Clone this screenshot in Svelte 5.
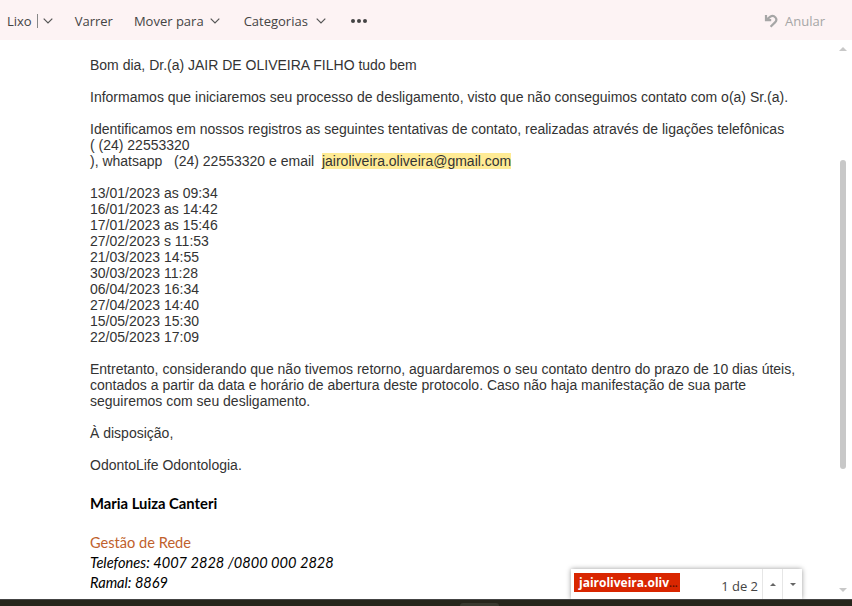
<script>
  const dates = ['13/01/2023 as 09:34','16/01/2023 as 14:42','17/01/2023 as 15:46','27/02/2023 s 11:53','21/03/2023 14:55','30/03/2023 11:28','06/04/2023 16:34','27/04/2023 14:40','15/05/2023 15:30','22/05/2023 17:09'];
</script>

<div class="page">
  <header class="toolbar">
    <div class="tools">
      <span class="lixo">Lixo<i class="sep"></i><svg class="chev" viewBox="0 0 10 6"><path d="M.7.7l4.3 4.3 4.3-4.3"/></svg></span>
      <span class="varrer">Varrer</span>
      <span>Mover para<svg class="chev" viewBox="0 0 10 6"><path d="M.7.7l4.3 4.3 4.3-4.3"/></svg></span>
      <span class="cats">Categorias<svg class="chev" viewBox="0 0 10 6"><path d="M.7.7l4.3 4.3 4.3-4.3"/></svg></span>
      <span class="dots"><b></b><b></b><b></b></span>
    </div>
    <div class="undo">
      <svg viewBox="0 0 14 14"><path d="M2 1v5.2h5.2M2.4 5.9L6.3 2.7a3.7 3.7 0 0 1 4.7 5.7L6.6 12.8"/></svg>
      <span>Anular</span>
    </div>
  </header>

  <main class="scroller">
    <article class="mail">
      <p>Bom dia, Dr.(a) JAIR DE OLIVEIRA FILHO tudo bem</p>
      <p>Informamos que iniciaremos seu processo de desligamento, visto que não conseguimos contato com o(a) Sr.(a).</p>
      <p>Identificamos em nossos registros as seguintes tentativas de contato, realizadas através de ligações telefônicas<br>( (24) 22553320<br>), whatsapp &nbsp; (24) 22553320 e email &nbsp;<mark>jairoliveira.oliveira@gmail.com</mark></p>
      <p>{#each dates as d}{d}<br>{/each}</p>
      <p>Entretanto, considerando que não tivemos retorno, aguardaremos o seu contato dentro do prazo de 10 dias úteis,<br>contados a partir da data e horário de abertura deste protocolo. Caso não haja manifestação de sua parte<br>seguiremos com seu desligamento.</p>
      <p>À disposição,</p>
      <p>OdontoLife Odontologia.</p>
      <div class="sign">
        <div class="name">Maria Luiza Canteri</div>
        <div class="role">Gestão de Rede</div>
        <div class="it">Telefones: 4007 2828 /0800 000 2828</div>
        <div class="it">Ramal: 8869</div>
      </div>
    </article>
    <div class="scrollbar">
      <span class="arrow up"></span>
      <div class="track"><span class="thumb"></span></div>
      <span class="arrow down"></span>
    </div>
    <div class="finder">
      <span class="hit">jairoliveira.oliv<small>...</small></span>
      <span class="count">1 de 2</span>
      <span class="btn"><i class="tri up"></i></span>
      <span class="btn"><i class="tri down"></i></span>
    </div>
  </main>
  <footer class="taskbar"><span class="tab"></span></footer>
</div>

<style>
  :global(body) { margin: 0; background: #fff; }
  .page { width: 852px; height: 606px; display: flex; flex-direction: column; overflow: hidden; }
  .toolbar { height: 40px; flex: none; box-sizing: border-box; padding-top: 1px; background: #fdf3f4; display: flex; align-items: center; justify-content: space-between; font: 13px "Open Sans", sans-serif; color: #444; }
  .tools { display: flex; align-items: center; gap: 22px; padding-left: 7px; }
  .tools > span { display: flex; align-items: center; gap: 6px; white-space: pre; }
  .lixo { gap: 5px !important; }
  .varrer { margin-right: -1px; }
  .cats { margin-left: -1px; gap: 8px !important; }
  .sep { width: 1px; height: 14px; background: #888; }
  .chev { width: 10px; height: 6px; fill: none; stroke: #555; stroke-width: 1.2; margin-right: 3px; }
  .lixo .chev { margin-right: 0; }
  .dots { gap: 2px !important; }
  .dots b { width: 4px; height: 4px; border-radius: 50%; background: #444; }
  .undo { display: flex; align-items: center; gap: 7px; padding-right: 27px; color: #a6a6a6; }
  .undo svg { width: 14px; height: 14px; fill: none; stroke: #a6a6a6; stroke-width: 2.2; }
  .scroller { flex: 1; min-height: 0; position: relative; display: flex; overflow: hidden; }
  .mail { flex: 1; padding: 17px 0 0 90px; font: 14px/16px "Liberation Sans", sans-serif; color: #333; }
  .mail p { margin: 0 0 16px; white-space: nowrap; }
  mark { background: #ffeb95; color: #333; }
  .sign { font: 14.6px/20px Lato, sans-serif; color: #000; padding-top: 4px; }
  .name { font-weight: 700; font-size: 14.8px; margin-bottom: 20px; }
  .role { color: #c0612c; }
  .it { font-style: italic; }
  .scrollbar { width: 12px; margin-right: 3px; display: flex; flex-direction: column; align-items: center; flex: none; }
  .arrow { width: 0; height: 0; border-left: 4px solid transparent; border-right: 4px solid transparent; flex: none; }
  .arrow.up { border-bottom: 4px solid #c8c8c8; margin-top: 7px; }
  .arrow.down { border-top: 4px solid #c8c8c8; margin-bottom: 7px; }
  .track { flex: 1; width: 6px; padding-top: 109px; display: flex; }
  .thumb { flex: 1; background: #c8c8c8; border-radius: 3px; margin-bottom: 119px; }
  .finder { position: absolute; left: 571px; bottom: 0; width: 231px; height: 30px; background: #fff; box-shadow: 0 0 5px rgba(0,0,0,.4); display: flex; align-items: center; font: 13px "Open Sans", sans-serif; color: #444; }
  .hit { position: absolute; left: 3px; top: 4px; width: 106px; height: 19px; box-sizing: border-box; padding-left: 5px; background: #d92600; color: #fff; font: 700 12px/19px "Open Sans", sans-serif; white-space: nowrap; overflow: hidden; }
  .hit small { color: #5a1000; font-size: 10px; }
  .count { margin-left: auto; margin-right: 4px; padding-top: 4px; }
  .btn { width: 19px; height: 100%; border-left: 1px solid #e6e6e6; display: flex; align-items: center; justify-content: center; }
  .tri { width: 0; height: 0; border-left: 3px solid transparent; border-right: 3px solid transparent; }
  .tri.up { border-bottom: 3px solid #666; }
  .tri.down { border-top: 3px solid #666; }
  .taskbar { height: 7px; flex: none; background: #27261c; border-top: 1px solid #444; box-sizing: border-box; padding: 3px 0 0 460px; display: flex; }
  .tab { width: 39px; background: #3a3a30; border-radius: 3px 3px 0 0; }
</style>
